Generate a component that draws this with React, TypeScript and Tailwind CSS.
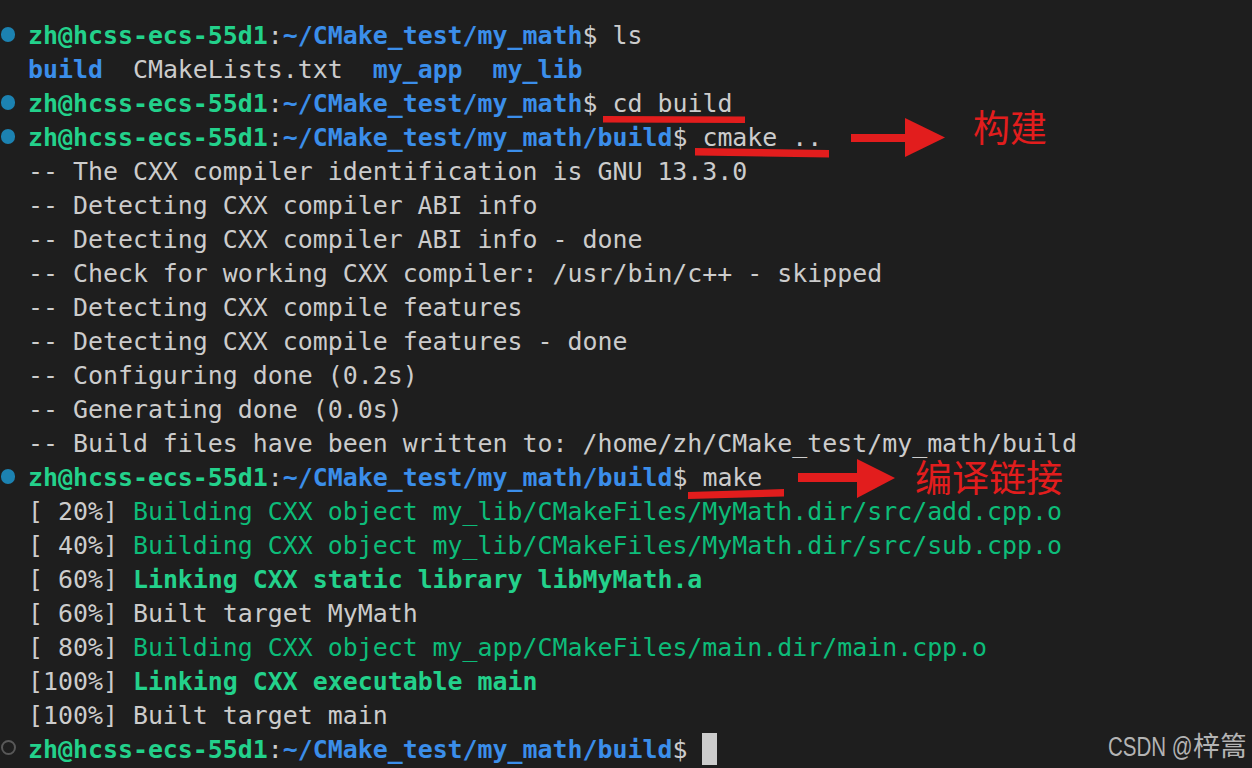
import React from "react";

type Gutter = "dot" | "ring" | "none";

function Line({ gutter = "none", children }: { gutter?: Gutter; children?: React.ReactNode }) {
  return (
    <div className="flex h-[34px] leading-[34px] whitespace-pre">
      <div className="w-[28px] shrink-0">
        {gutter === "dot" && <div className="ml-[0.5px] mt-[8px] h-[14.5px] w-[14.5px] rounded-full bg-[#1c82b1]" />}
        {gutter === "ring" && (
          <div className="ml-[0.5px] mt-[7px] h-[15px] w-[15px] rounded-full border-[2.5px] border-[#585858]" />
        )}
      </div>
      <span>{children}</span>
    </div>
  );
}

function Prompt({ path }: { path: string }) {
  return (
    <>
      <span className="font-bold text-[#23d18b]">zh@hcss-ecs-55d1</span>
      <span>:</span>
      <span className="font-bold text-[#3b8eea]">{path}</span>
      <span>$ </span>
    </>
  );
}

const G = ({ children }: { children: React.ReactNode }) => <span className="text-[#0dbc79]">{children}</span>;
const GB = ({ children }: { children: React.ReactNode }) => (
  <span className="font-bold text-[#23d18b]">{children}</span>
);
const B = ({ children }: { children: React.ReactNode }) => (
  <span className="font-bold text-[#3b8eea]">{children}</span>
);

export default function App() {
  return (
    <div className="relative h-[768px] w-[1252px] overflow-hidden bg-[#1e1e1e] pt-[19px] text-[24.9px] text-[#cccccc] font-['DejaVu_Sans_Mono',monospace]">
      <Line gutter="dot">
        <Prompt path="~/CMake_test/my_math" />ls
      </Line>
      <Line>
        <B>build</B>
        {"  CMakeLists.txt  "}
        <B>my_app</B>
        {"  "}
        <B>my_lib</B>
      </Line>
      <Line gutter="dot">
        <Prompt path="~/CMake_test/my_math" />cd build
      </Line>
      <Line gutter="dot">
        <Prompt path="~/CMake_test/my_math/build" />cmake ..
      </Line>
      <Line>-- The CXX compiler identification is GNU 13.3.0</Line>
      <Line>-- Detecting CXX compiler ABI info</Line>
      <Line>-- Detecting CXX compiler ABI info - done</Line>
      <Line>-- Check for working CXX compiler: /usr/bin/c++ - skipped</Line>
      <Line>-- Detecting CXX compile features</Line>
      <Line>-- Detecting CXX compile features - done</Line>
      <Line>-- Configuring done (0.2s)</Line>
      <Line>-- Generating done (0.0s)</Line>
      <Line>-- Build files have been written to: /home/zh/CMake_test/my_math/build</Line>
      <Line gutter="dot">
        <Prompt path="~/CMake_test/my_math/build" />make
      </Line>
      <Line>
        {"[ 20%] "}
        <G>Building CXX object my_lib/CMakeFiles/MyMath.dir/src/add.cpp.o</G>
      </Line>
      <Line>
        {"[ 40%] "}
        <G>Building CXX object my_lib/CMakeFiles/MyMath.dir/src/sub.cpp.o</G>
      </Line>
      <Line>
        {"[ 60%] "}
        <GB>Linking CXX static library libMyMath.a</GB>
      </Line>
      <Line>[ 60%] Built target MyMath</Line>
      <Line>
        {"[ 80%] "}
        <G>Building CXX object my_app/CMakeFiles/main.dir/main.cpp.o</G>
      </Line>
      <Line>
        {"[100%] "}
        <GB>Linking CXX executable main</GB>
      </Line>
      <Line>[100%] Built target main</Line>
      <Line gutter="ring">
        <Prompt path="~/CMake_test/my_math/build" />
        <span className="inline-block h-[32px] w-[15px] align-top bg-[#cccccc]" />
      </Line>

      {/* annotations */}
      <svg className="pointer-events-none absolute left-0 top-0" width="1252" height="768" viewBox="0 0 1252 768">
        <g fill="#e21d1d">
          <polygon points="603,116 745,116.5 745,123 603,122.5" />
          <polygon points="695,148 829,150 829,157.5 695,155.5" />
          <polygon points="688,492 784,489 784,496.5 688,499" />
          <rect x="851" y="134" width="56" height="8" />
          <polygon points="905,118 945,137.5 905,157" />
          <rect x="798" y="473" width="61" height="9" />
          <polygon points="857,459 895,478 857,498" />
        </g>
      </svg>
      <div className="absolute left-[973px] top-[108px] text-[37px] leading-none text-[#e21d1d] font-['Noto_Sans_CJK_SC',sans-serif]">
        构建
      </div>
      <div className="absolute left-[915px] top-[458px] text-[37px] leading-none text-[#e21d1d] font-['Noto_Sans_CJK_SC',sans-serif]">
        编译链接
      </div>
      <div className="absolute left-[1108px] top-[734px] flex items-baseline text-[27px] leading-none text-[#b4b4b4] font-['Liberation_Sans','Noto_Sans_CJK_SC',sans-serif]">
        <div className="w-[85px] whitespace-pre">
          <span className="inline-block origin-left scale-x-[0.76]">CSDN @</span>
        </div>
        <span>梓篙</span>
      </div>
    </div>
  );
}
